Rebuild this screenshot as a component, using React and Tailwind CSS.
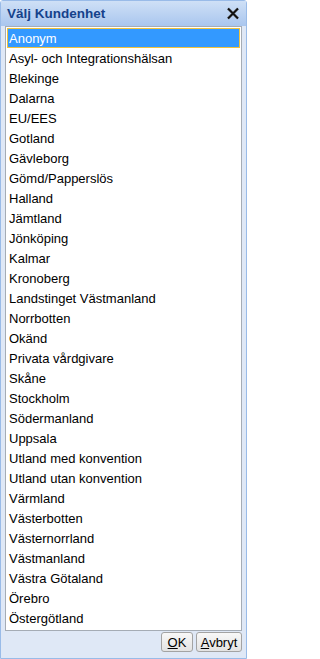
import { useState } from 'react';

const items = [
  'Anonym',
  'Asyl- och Integrationshälsan',
  'Blekinge',
  'Dalarna',
  'EU/EES',
  'Gotland',
  'Gävleborg',
  'Gömd/Papperslös',
  'Halland',
  'Jämtland',
  'Jönköping',
  'Kalmar',
  'Kronoberg',
  'Landstinget Västmanland',
  'Norrbotten',
  'Okänd',
  'Privata vårdgivare',
  'Skåne',
  'Stockholm',
  'Södermanland',
  'Uppsala',
  'Utland med konvention',
  'Utland utan konvention',
  'Värmland',
  'Västerbotten',
  'Västernorrland',
  'Västmanland',
  'Västra Götaland',
  'Örebro',
  'Östergötland',
];

function CloseIcon() {
  return (
    <svg width="14" height="13" viewBox="0 0 14 13">
      <path d="M2 1.5 L12 11.5 M12 1.5 L2 11.5" stroke="#9aa4b0" strokeWidth="3" />
      <path d="M2 1.5 L12 11.5 M12 1.5 L2 11.5" stroke="#111" strokeWidth="2" />
    </svg>
  );
}

export default function App() {
  const [selected, setSelected] = useState(0);

  return (
    <div className="w-[247px] h-[659px] flex flex-col bg-[#dfe8f6] border border-[#99bbe8] rounded-t-[3px] font-['Liberation_Sans',Arial,sans-serif] select-none">
      {/* Titelrad */}
      <div className="h-[25px] shrink-0 flex items-center justify-between pl-[6px] pr-[6px] bg-gradient-to-b from-[#cfe0f6] to-[#a9c6ee]">
        <span className="text-[13.5px] font-bold text-[#15428b] leading-none">Välj Kundenhet</span>
        <CloseIcon />
      </div>

      {/* Lista */}
      <div className="mx-[4px] h-[605px] shrink-0 bg-white border border-[#a5acb5] pt-px overflow-hidden">
        {items.map((name, i) => (
          <div
            key={name}
            onClick={() => setSelected(i)}
            className={`h-[20px] mx-px pl-[1px] flex items-center text-[13px] leading-none border ${
              selected === i
                ? 'bg-[#3399ff] text-white border-[#f0c23c]'
                : 'text-black border-transparent'
            }`}
          >
            {name}
          </div>
        ))}
      </div>

      {/* Knappar */}
      <div className="flex-1 flex items-start justify-end gap-[3px] pr-[4px] pt-[1px]">
        <button className="w-[32px] h-[20px] rounded-[3px] border border-[#a3a3a3] bg-gradient-to-b from-[#f8f8f8] to-[#e3e3e3] text-[13px] text-black leading-none">
          <span className="underline">O</span>K
        </button>
        <button className="w-[46px] h-[20px] rounded-[3px] border border-[#a3a3a3] bg-gradient-to-b from-[#f8f8f8] to-[#e3e3e3] text-[13px] text-black leading-none">
          <span className="underline">A</span>vbryt
        </button>
      </div>
    </div>
  );
}
